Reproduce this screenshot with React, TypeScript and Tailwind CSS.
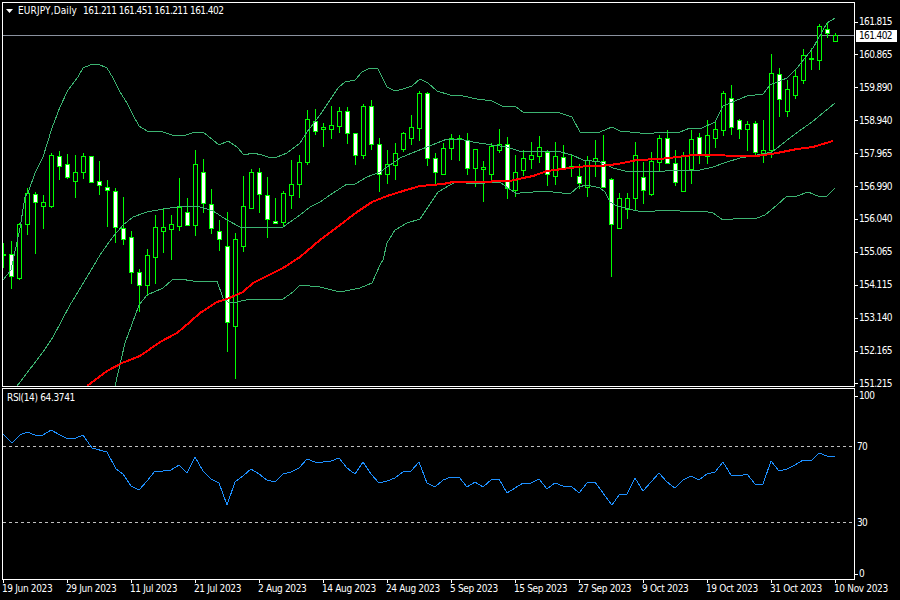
// EURJPY daily chart, numbers read off the picture in page pixels
type Candle = [number, number, number, number, number];

const candles: Candle[] = [
  [243, 254, 255, 267, 0], [241, 254, 276, 288, 1], [223, 224, 278, 279, 0], [188, 193, 224, 234, 0],
  [192, 194, 202, 253, 1], [195, 202, 206, 228, 0], [153, 155, 206, 207, 0], [151, 156, 166, 179, 1],
  [154, 164, 177, 178, 1], [155, 172, 181, 197, 0], [153, 156, 172, 178, 0], [156, 156, 182, 182, 1],
  [161, 181, 185, 194, 1], [180, 187, 190, 226, 1], [188, 191, 227, 242, 1], [197, 228, 239, 244, 1],
  [231, 237, 272, 283, 1], [269, 272, 285, 311, 1], [249, 255, 285, 295, 0], [215, 227, 257, 283, 0],
  [208, 227, 231, 252, 0], [215, 224, 229, 259, 0], [178, 207, 226, 230, 0], [198, 212, 225, 225, 1],
  [150, 164, 225, 235, 0], [159, 172, 203, 212, 1], [189, 204, 228, 233, 1], [220, 231, 239, 250, 1],
  [212, 246, 322, 351, 1], [233, 239, 326, 378, 0], [176, 206, 246, 251, 0], [169, 172, 208, 208, 0],
  [168, 172, 194, 212, 1], [177, 195, 219, 237, 1], [198, 221, 223, 223, 1], [191, 193, 222, 226, 0],
  [160, 184, 195, 208, 0], [155, 162, 184, 197, 0], [110, 119, 162, 164, 0], [109, 121, 131, 134, 1],
  [123, 127, 129, 146, 0], [106, 125, 129, 138, 0], [107, 111, 126, 132, 0], [107, 111, 133, 143, 1],
  [133, 133, 155, 164, 1], [104, 106, 155, 158, 0], [100, 106, 144, 149, 1], [138, 144, 174, 191, 1],
  [150, 164, 174, 183, 0], [143, 153, 165, 179, 0], [132, 133, 149, 151, 0], [115, 127, 138, 144, 0],
  [91, 93, 128, 140, 0], [92, 93, 158, 165, 1], [153, 158, 172, 184, 1], [143, 148, 174, 174, 0],
  [134, 138, 148, 159, 0], [135, 138, 139, 160, 0], [133, 140, 168, 174, 1], [149, 149, 168, 186, 0],
  [161, 167, 169, 201, 0], [143, 146, 174, 180, 0], [129, 144, 150, 152, 0], [137, 144, 188, 198, 1],
  [155, 172, 190, 196, 0], [150, 158, 170, 175, 0], [142, 155, 159, 168, 0], [136, 147, 156, 162, 0],
  [150, 152, 174, 185, 1], [142, 156, 176, 184, 0], [145, 157, 168, 168, 1], [154, 166, 168, 176, 0],
  [164, 176, 183, 188, 1], [156, 160, 187, 196, 0], [140, 158, 161, 176, 0], [135, 161, 187, 187, 1],
  [178, 179, 224, 276, 1], [193, 198, 228, 228, 0], [193, 198, 209, 218, 0], [142, 155, 198, 210, 0],
  [162, 177, 190, 203, 1], [152, 161, 194, 195, 0], [135, 138, 162, 171, 0], [130, 138, 163, 163, 1],
  [150, 163, 182, 185, 1], [152, 156, 191, 191, 0], [130, 139, 169, 183, 0], [133, 137, 154, 163, 1],
  [120, 135, 156, 163, 0], [120, 129, 138, 147, 0], [91, 93, 130, 135, 0], [85, 98, 127, 134, 1],
  [119, 120, 129, 138, 1], [121, 124, 129, 150, 0], [121, 123, 152, 154, 1], [120, 150, 153, 162, 0],
  [54, 73, 150, 157, 0], [68, 74, 99, 116, 1], [80, 89, 111, 116, 0], [69, 76, 95, 98, 0],
  [49, 55, 80, 83, 0], [48, 58, 59, 69, 0], [24, 26, 60, 69, 0], [22, 29, 33, 37, 1], [33, 35, 41, 41, 0],
];

const upperBand = "3,280 11,270 20,228 25,197 28,193 35,173 43,157 52,128 60,107 68,90 78,77 83,68 90,65 98,64 107,68 113,78 120,92 127,103 133,115 139,126 147,131 163,132 172,135 183,136 195,132 203,132 213,140 219,145 228,141 237,147 244,155 253,153 262,155 268,157 277,157 287,153 300,143 307,132 320,115 338,88 345,82 355,80 362,72 370,68 378,69 387,87 395,91 403,89 412,86 420,79 428,83 437,91 450,95 463,96 477,99 492,101 502,106 515,106 523,112 557,112 572,117 580,132 600,132 612,127 620,131 650,134 658,132 680,132 690,128 700,129 715,122 723,106 747,96 763,94 770,85 787,78 797,68 813,48 827,23 835,18";
const middleBand = "17,386 43,352 53,337 70,305 87,277 100,255 112,238 123,225 133,217 147,212 163,209 177,207 197,206 213,211 227,220 240,227 267,228 283,227 300,215 310,207 320,202 333,193 347,184 355,184 367,177 380,172 400,158 412,153 427,147 447,139 460,139 473,142 492,145 507,147 522,152 543,151 557,151 572,155 583,160 600,162 613,168 625,171 648,172 665,171 678,170 700,170 713,167 727,162 740,158 763,154 772,152 795,134 812,122 835,103";
const lowerBand = "115,386 125,343 139,305 147,295 163,288 172,280 180,279 193,281 217,281 223,298 228,302 237,302 250,299 283,299 293,292 300,285 320,287 340,292 360,288 372,283 380,265 383,260 387,243 395,230 407,223 420,219 428,207 438,192 457,181 470,184 500,182 508,188 517,194 523,192 533,192 540,191 553,192 570,194 578,187 587,185 600,188 605,192 610,202 617,206 633,210 643,212 667,210 693,212 703,211 713,213 723,220 733,219 757,218 765,215 777,205 787,196 797,196 808,192 820,197 827,196 835,188";
const movingAverage = "87,386 107,371 122,363 140,356 160,342 177,333 190,322 200,313 217,302 227,299 243,292 253,283 283,268 300,257 320,240 340,225 357,212 372,202 387,196 403,191 420,186 443,184 453,182 473,182 510,181 523,178 533,176 547,171 570,168 587,166 600,166 618,164 637,160 660,159 677,157 693,155 757,156 777,153 797,149 813,147 833,141";
const rsiLine = "3,434 12,443 20,435 27,432 35,435 43,435 51,430 60,435 68,439 76,438 83,435 92,448 107,452 116,469 123,474 131,486 139,490 147,481 155,471 163,471 171,470 179,465 187,473 195,457 203,471 211,479 219,483 227,505 235,482 243,476 251,469 259,474 267,480 275,482 283,474 291,472 299,468 307,459 315,462 323,462 331,461 339,458 347,468 355,474 363,462 371,474 379,483 387,481 395,478 403,472 411,471 419,462 427,483 435,487 443,480 451,477 459,477 467,487 475,482 483,487 491,480 499,479 507,493 515,488 523,483 531,483 539,479 547,489 555,483 563,486 571,486 579,493 587,483 595,482 603,493 612,505 619,495 627,494 635,478 643,491 651,482 659,473 667,482 675,488 683,480 691,476 699,480 707,474 715,472 723,462 731,475 739,476 747,474 755,484 763,484 771,461 779,471 787,469 795,465 803,460 811,461 819,453 827,456 835,457";

const prices = ["161.815", "160.865", "159.890", "158.940", "157.965", "156.990", "156.040", "155.065", "154.115", "153.140", "152.165", "151.215"];
const dates = ["19 Jun 2023", "29 Jun 2023", "11 Jul 2023", "21 Jul 2023", "2 Aug 2023", "14 Aug 2023", "24 Aug 2023", "5 Sep 2023", "15 Sep 2023", "27 Sep 2023", "9 Oct 2023", "19 Oct 2023", "31 Oct 2023", "10 Nov 2023"];

function PriceChart() {
  return (
    <svg width={851} height={383} viewBox="3 3 851 383" className="block" shapeRendering="crispEdges">
      <line x1={3} x2={854} y1={35.5} y2={35.5} stroke="#8a919e" />
      {candles.map(([high, top, bottom, low, filled], i) => {
        const x = 3 + 8 * i;
        return (
          <g key={x}>
            <line x1={x + 0.5} x2={x + 0.5} y1={high} y2={low + 1} stroke="#00ff00" />
            <rect x={x - 1.5} y={top + 0.5} width={4} height={bottom - top} fill={filled ? "#ffffff" : "#000000"} stroke="#00ff00" />
          </g>
        );
      })}
      <polyline points={upperBand} fill="none" stroke="#3cb371" />
      <polyline points={middleBand} fill="none" stroke="#3cb371" />
      <polyline points={lowerBand} fill="none" stroke="#3cb371" />
      <polyline points={movingAverage} fill="none" stroke="#ff0000" strokeWidth={2} />
    </svg>
  );
}

function RsiChart() {
  return (
    <svg width={851} height={190} viewBox="3 389 851 190" className="block" shapeRendering="crispEdges">
      <line x1={3} x2={854} y1={446.5} y2={446.5} stroke="#c0c0c0" strokeDasharray="3 3" />
      <line x1={3} x2={854} y1={522.5} y2={522.5} stroke="#c0c0c0" strokeDasharray="3 3" />
      <polyline points={rsiLine} fill="none" stroke="#1e90ff" />
    </svg>
  );
}

export default function App() {
  return (
    <div className="w-[900px] h-[600px] overflow-hidden bg-black pl-[2px] pt-[2px] text-white font-['DejaVu_Sans_Condensed','Liberation_Sans',sans-serif] text-[10px] leading-3 tracking-[-0.62px]">
      <div className="flex h-[385px]">
        <div className="relative w-[853px] h-[385px] border border-white">
          <PriceChart />
          <div className="absolute left-[3px] top-[2px] flex items-center h-3">
            <svg width={7} height={4} viewBox="0 0 7 4" className="mr-[5px]">
              <polygon points="0,0 7,0 3.5,4" fill="#ffffff" />
            </svg>
            <span className="mr-[6px] tracking-[0.13px]">EURJPY,Daily</span>
            <span className="tracking-[-0.55px]">161.211 161.451 161.211 161.402</span>
          </div>
        </div>
        <div className="relative flex flex-col justify-between h-[374px] mt-[14px]">
          {prices.map((price) => (
            <div key={price} className="flex items-center h-3">
              <div className="w-[3px] h-px bg-white mr-px" />
              <span>{price}</span>
            </div>
          ))}
          <div className="absolute left-px top-[14px] w-[41px] h-3 pl-[3px] bg-white text-black">161.402</div>
        </div>
      </div>
      <div className="flex mt-px">
        <div className="relative w-[853px] h-[192px] border border-white">
          <RsiChart />
          <span className="absolute left-1 top-[3px] tracking-[-0.35px]">RSI(14) 64.3741</span>
        </div>
        <div className="flex flex-col pt-[2px]">
          <div className="flex items-center h-3">
            <div className="w-[3px] h-px bg-white mr-px" />
            <span>100</span>
          </div>
          <span className="mt-[39px] h-3 pl-[2px]">70</span>
          <span className="mt-[64px] h-3 pl-[2px]">30</span>
          <div className="flex items-center h-3 mt-[39px]">
            <div className="w-[3px] h-px bg-white mr-px" />
            <span>0</span>
          </div>
        </div>
      </div>
      <div className="flex pl-px">
        {dates.map((date) => (
          <div key={date} className="w-16 shrink-0">
            <div className="w-px h-[3px] bg-white" />
            <div className="-ml-px whitespace-nowrap tracking-[-0.35px]">{date}</div>
          </div>
        ))}
      </div>
    </div>
  );
}
